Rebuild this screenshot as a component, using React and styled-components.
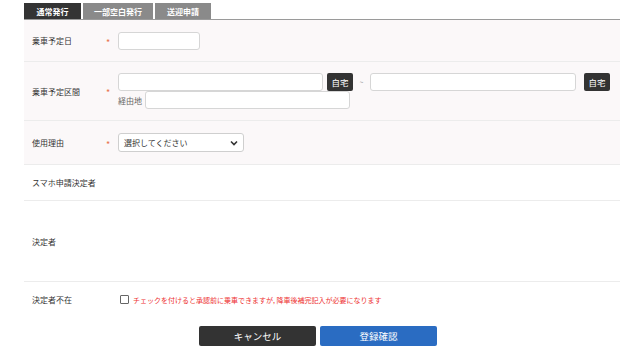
import React from 'react'
import styled, { createGlobalStyle } from 'styled-components';

const Global = createGlobalStyle`
body{
    margin: 0;
    background: #fff;
    font-family: "Noto Sans CJK JP", "Noto Sans", sans-serif;
    color: #333;
}
`;

const App = () => {
  return <Wrapper>
    <Global />
    <Tabs>
        <Tab active w={57}>通常発行</Tab>
        <Tab w={70}>一部空白発行</Tab>
        <Tab w={56}>送迎申請</Tab>
    </Tabs>
    <Row tinted h={42}>
        <Label>乗車予定日</Label>
        <Req>*</Req>
        <Field><Input w={82} /></Field>
    </Row>
    <Row tinted h={59}>
        <Label>乗車予定区間</Label>
        <Req>*</Req>
        <Field>
            <Line>
                <Input w={205} />
                <HomeBtn gap={4}>自宅</HomeBtn>
                <Tilde>~</Tilde>
                <Input w={206} />
                <HomeBtn gap={8}>自宅</HomeBtn>
            </Line>
            <Line>
                <Via>経由地</Via>
                <Input w={205} />
            </Line>
        </Field>
    </Row>
    <Row tinted h={44}>
        <Label>使用理由</Label>
        <Req>*</Req>
        <Field>
            <Select>
                <span>選択してください</span>
                <svg width="8" height="6" viewBox="0 0 8 6"><path d="M1 1.5 L4 4.5 L7 1.5" fill="none" stroke="#333" strokeWidth="1.6" /></svg>
            </Select>
        </Field>
    </Row>
    <Row h={36}>
        <Label>スマホ申請決定者</Label>
    </Row>
    <Row h={81}>
        <Label>決定者</Label>
    </Row>
    <Row h={35} last>
        <Label>決定者不在</Label>
        <Req />
        <Field>
            <Check>
                <Box />
                <Note>チェックを付けると承認前に乗車できますが, 降車後補完記入が必要になります</Note>
            </Check>
        </Field>
    </Row>
    <Actions>
        <Button>キャンセル</Button>
        <Button primary>登録確認</Button>
    </Actions>
  </Wrapper>
};

const Wrapper = styled.div`
width: 596px;
padding: 3px 0 0 24px;
`;

const Tabs = styled.div`
display: flex;
gap: 2px;
border-bottom: 1px solid #9a9a9a;
`;

const Tab = styled.div`
width: ${({w}) => w}px;
height: 16px;
display: flex;
align-items: center;
justify-content: center;
font-size: 8px;
font-weight: bold;
color: #fff;
background: ${({active}) => active ? '#343434' : '#8a8a8a'};
`;

const Row = styled.div`
display: grid;
grid-template-columns: 80px 14px 1fr;
align-items: center;
height: ${({h}) => h}px;
box-sizing: border-box;
background: ${({tinted}) => tinted ? '#fbf8f9' : '#fff'};
border-bottom: ${({last}) => last ? 'none' : '1px solid #ececec'};
`;

const Label = styled.div`
padding-left: 8px;
font-size: 8px;
color: #333;
`;

const Req = styled.div`
font-size: 9px;
color: #e8734a;
padding-left: 2px;
padding-top: 3px;
`;

const Field = styled.div`
display: flex;
flex-direction: column;
`;

const Line = styled.div`
display: flex;
align-items: center;
`;

const Input = styled.div`
width: ${({w}) => w}px;
height: 18px;
box-sizing: border-box;
background: #fff;
border: 1px solid #d6d6d6;
border-radius: 3px;
`;

const HomeBtn = styled.div`
margin-left: ${({gap}) => gap}px;
width: 26px;
height: 18px;
display: flex;
align-items: center;
justify-content: center;
background: #333;
color: #fff;
font-size: 8.5px;
border-radius: 2px;
`;

const Tilde = styled.div`
width: 17px;
text-align: center;
font-size: 7px;
color: #999;
`;

const Via = styled.div`
width: 27px;
font-size: 8px;
color: #666;
`;

const Select = styled.div`
width: 126px;
height: 19px;
box-sizing: border-box;
display: flex;
align-items: center;
justify-content: space-between;
padding: 0 5px 0 5px;
background: #fff;
border: 1px solid #cfcfcf;
border-radius: 3px;
font-size: 8px;
color: #333;
`;

const Check = styled.div`
display: flex;
align-items: center;
gap: 4px;
padding-left: 2px;
`;

const Box = styled.div`
width: 7px;
height: 7px;
border: 1px solid #666;
border-radius: 1px;
background: #fff;
`;

const Note = styled.div`
font-size: 7px;
color: #ee3333;
`;

const Actions = styled.div`
display: flex;
justify-content: center;
gap: 4px;
padding: 9px 8px 0 0;
`;

const Button = styled.div`
width: 117px;
height: 20px;
display: flex;
align-items: center;
justify-content: center;
font-size: 9.5px;
color: #fff;
background: ${({primary}) => primary ? '#2a6cc2' : '#333'};
border-radius: 2px;
`;

export default App
